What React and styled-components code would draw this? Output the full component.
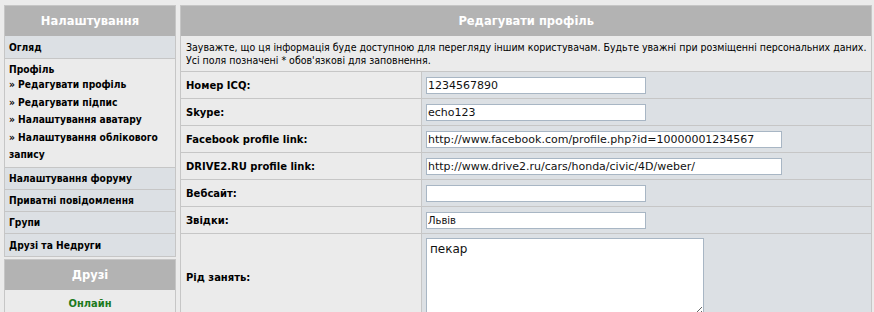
import React from 'react';
import styled, { createGlobalStyle } from 'styled-components';

const GlobalStyle = createGlobalStyle`
  html, body {
    margin: 0;
    padding: 0;
    background: #ebebeb;
    overflow: hidden;
  }
  body {
    font-family: "DejaVu Sans", Verdana, sans-serif;
    font-size: 10px;
    color: #000;
  }
  * { box-sizing: border-box; }
`;

const narrow = `"DejaVu Sans Condensed", "DejaVu Sans", Verdana, sans-serif`;

const Page = styled.div`
  display: flex;
  align-items: flex-start;
  gap: 4px;
  padding: 5px 5px 0 4px;
`;

const Sidebar = styled.div`
  width: 172px;
  flex: none;
  display: flex;
  flex-direction: column;
  gap: 2px;
  font-family: ${narrow};
`;

const Panel = styled.div`
  border: 1px solid #c6c6c6;
  background: #ebebeb;
`;

const MainPanel = styled(Panel)`
  flex: 1;
`;

const PanelHead = styled.div`
  height: 30px;
  background: #b3b3b3;
  color: #fff;
  font-family: "DejaVu Sans", Verdana, sans-serif;
  font-weight: bold;
  font-size: 11.5px;
  display: flex;
  align-items: center;
  justify-content: center;
`;

const SideRow = styled.div`
  height: ${p => (p.$tall ? 23 : 22)}px;
  padding: 0 4px;
  display: flex;
  align-items: center;
  font-weight: bold;
  font-size: 10.2px;
  background: #dce0e4;
  border-bottom: ${p => (p.$last ? 'none' : '1px solid #c6c6c6')};
`;

const ProfileBlock = styled.div`
  padding: 4px 4px 3.5px;
  border-bottom: 1px solid #c6c6c6;
  font-weight: bold;
  font-size: 10.2px;
`;

const BlockTitle = styled.div`
  line-height: 13px;
`;

const LinkList = styled.ul`
  list-style: none;
  margin: 0;
  padding: 0;
  line-height: 17.5px;
`;

const Online = styled.div`
  height: 26px;
  display: flex;
  align-items: center;
  justify-content: center;
  font-weight: bold;
  font-size: 11px;
  color: #1d7a1d;
`;

const Notice = styled.div`
  padding: 5px 5px 4px;
  line-height: 13px;
  font-family: ${narrow};
  font-size: 10.5px;
  white-space: nowrap;
  border-bottom: 1px solid #c6c6c6;
`;

const Form = styled.div`
  display: grid;
  grid-template-columns: 241px 1fr;
`;

const Label = styled.div`
  min-height: 27px;
  padding: 0 5px;
  display: flex;
  align-items: center;
  font-weight: bold;
  border-right: 1px solid #c6c6c6;
  border-bottom: 1px solid #c6c6c6;
`;

const Field = styled.div`
  background: #dce0e4;
  padding: 4px 4px;
  display: flex;
  align-items: center;
  border-bottom: 1px solid #c6c6c6;
`;

const Input = styled.input`
  width: ${p => (p.$wide ? 356 : 220)}px;
  height: 17px;
  margin: 0;
  padding: 0 1px;
  border: 1px solid #a8b6c4;
  background: #fff;
  font-family: "DejaVu Sans", Verdana, sans-serif;
  font-size: ${p => (p.$small ? 10 : 11)}px;
  color: #111;
  outline: none;
`;

const TextArea = styled.textarea`
  width: 278px;
  height: 78px;
  margin: 0;
  padding: 3px 3px;
  border: 1px solid #a8b6c4;
  background: #fff;
  font-family: "DejaVu Sans", Verdana, sans-serif;
  font-size: 12px;
  line-height: 15px;
  color: #111;
  outline: none;
`;

const sideLinks = [
  '» Редагувати профіль',
  '» Редагувати підпис',
  '» Налаштування аватару',
  '» Налаштування облікового запису',
];

const fields = [
  { label: 'Номер ICQ:', value: '1234567890' },
  { label: 'Skype:', value: 'echo123' },
  { label: 'Facebook profile link:', value: 'http://www.facebook.com/profile.php?id=10000001234567', wide: true },
  { label: 'DRIVE2.RU profile link:', value: 'http://www.drive2.ru/cars/honda/civic/4D/weber/', wide: true },
  { label: 'Вебсайт:', value: '' },
  { label: 'Звідки:', value: 'Львів', small: true },
];

const App = () => {
  return (
    <>
      <GlobalStyle />
      <Page>
        <Sidebar>
          <Panel>
            <PanelHead>Налаштування</PanelHead>
            <SideRow $tall>Огляд</SideRow>
            <ProfileBlock>
              <BlockTitle>Профіль</BlockTitle>
              <LinkList>
                {sideLinks.map(l => <li key={l}>{l}</li>)}
              </LinkList>
            </ProfileBlock>
            <SideRow>Налаштування форуму</SideRow>
            <SideRow>Приватні повідомлення</SideRow>
            <SideRow>Групи</SideRow>
            <SideRow $last>Друзі та Недруги</SideRow>
          </Panel>
          <Panel>
            <PanelHead>Друзі</PanelHead>
            <Online>Онлайн</Online>
          </Panel>
        </Sidebar>
        <MainPanel>
          <PanelHead>Редагувати профіль</PanelHead>
          <Notice>
            Зауважте, що ця інформація буде доступною для перегляду іншим користувачам. Будьте уважні при розміщенні персональних даних.
            <br />
            Усі поля позначені * обов'язкові для заповнення.
          </Notice>
          <Form>
            {fields.map(f => (
              <React.Fragment key={f.label}>
                <Label>{f.label}</Label>
                <Field>
                  <Input defaultValue={f.value} $wide={f.wide} $small={f.small} />
                </Field>
              </React.Fragment>
            ))}
            <Label>Рід занять:</Label>
            <Field>
              <TextArea defaultValue="пекар" />
            </Field>
          </Form>
        </MainPanel>
      </Page>
    </>
  );
};

export default App;
